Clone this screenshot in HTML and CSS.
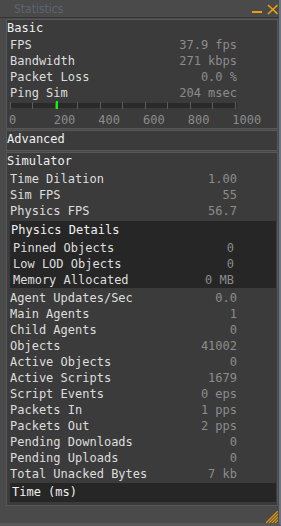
FILE: index.html
```html
<!DOCTYPE html>
<html lang="en">

<head>
  <meta charset="UTF-8">
  <meta name="viewport" content="width=device-width, initial-scale=1.0">
  <title>Statistics</title>

  <link rel="stylesheet" href="styles.css">
</head>

<body>
  <div class="floater">
    <div class="titlebar">
      <span class="title">Statistics</span>
      <span class="buttons">
        <svg class="btn" width="11" height="11" viewBox="0 0 11 11"><rect x="1" y="7" width="10" height="2" fill="#e8a010"/></svg>
        <svg class="btn" width="11" height="11" viewBox="0 0 11 11"><path d="M1 1 L10.5 10 M10.5 1 L1 10" stroke="#e8a010" stroke-width="1.6"/></svg>
      </span>
    </div>

    <div class="content">
      <section class="panel basic">
        <div class="panel-head">Basic</div>
        <div class="stat"><span>FPS</span><span class="val">37.9 fps</span></div>
        <div class="stat"><span>Bandwidth</span><span class="val">271 kbps</span></div>
        <div class="stat"><span>Packet Loss</span><span class="val">0.0 %</span></div>
        <div class="stat"><span>Ping Sim</span><span class="val">204 msec</span></div>
        <div class="graph">
          <div class="bar">
            <div class="marker" style="left: 45.9px"></div>
          </div>
          <div class="scale">
            <span>0</span><span>200</span><span>400</span><span>600</span><span>800</span><span>1000</span>
          </div>
        </div>
      </section>

      <section class="panel advanced">
        <div class="panel-head">Advanced</div>
      </section>

      <section class="panel simulator">
        <div class="panel-head">Simulator</div>
        <div class="stat"><span>Time Dilation</span><span class="val">1.00</span></div>
        <div class="stat"><span>Sim FPS</span><span class="val">55</span></div>
        <div class="stat"><span>Physics FPS</span><span class="val">56.7</span></div>

        <div class="box">
          <div class="box-head">Physics Details</div>
          <div class="stat"><span>Pinned Objects</span><span class="val">0</span></div>
          <div class="stat"><span>Low LOD Objects</span><span class="val">0</span></div>
          <div class="stat"><span>Memory Allocated</span><span class="val">0 MB</span></div>
        </div>

        <div class="stat"><span>Agent Updates/Sec</span><span class="val">0.0</span></div>
        <div class="stat"><span>Main Agents</span><span class="val">1</span></div>
        <div class="stat"><span>Child Agents</span><span class="val">0</span></div>
        <div class="stat"><span>Objects</span><span class="val">41002</span></div>
        <div class="stat"><span>Active Objects</span><span class="val">0</span></div>
        <div class="stat"><span>Active Scripts</span><span class="val">1679</span></div>
        <div class="stat"><span>Script Events</span><span class="val">0 eps</span></div>
        <div class="stat"><span>Packets In</span><span class="val">1 pps</span></div>
        <div class="stat"><span>Packets Out</span><span class="val">2 pps</span></div>
        <div class="stat"><span>Pending Downloads</span><span class="val">0</span></div>
        <div class="stat"><span>Pending Uploads</span><span class="val">0</span></div>
        <div class="stat"><span>Total Unacked Bytes</span><span class="val">7 kb</span></div>

        <div class="box time">
          <div class="box-head">Time (ms)</div>
        </div>
      </section>
    </div>

    <svg class="grip" width="12" height="12" viewBox="0 0 12 12">
      <path d="M12 0 L0 12 M12 3 L3 12 M12 6 L6 12 M12 9 L9 12" stroke="#d89410" stroke-width="1.3"/>
    </svg>
  </div>
</body>

</html>
```

FILE: styles.css
```css
body {
  margin: 0;
  background-color: #4a4a4a;
  font-family: "DejaVu Sans Mono", monospace;
  font-size: 12px;
  color: #dedede;
}

.floater {
  position: relative;
  width: 281px;
  height: 526px;
  box-sizing: border-box;
  background-color: #4a4a4a;
  border-right: 2px solid #6a7580;
  border-bottom: 3px solid #585858;
}

.titlebar {
  height: 17px;
  border-bottom: 1px solid #333333;
  display: flex;
  align-items: center;
  justify-content: space-between;
  padding: 0 1px 0 14px;
}

.title {
  font-family: "DejaVu Sans Condensed", "DejaVu Sans", sans-serif;
  font-stretch: condensed;
  font-size: 12px;
  color: #5a6570;
}

.buttons {
  display: flex;
  gap: 5px;
  margin-top: 1px;
}

.content {
  padding: 1px 1px 0 6px;
  display: flex;
  flex-direction: column;
  gap: 1px;
}

.panel {
  background-color: #3b3b3b;
  border: 1px solid #575757;
}

.panel-head {
  height: 17px;
  line-height: 17px;
  color: #f0f0f0;
}

.advanced {
  height: 19px;
}

.simulator {
  height: 352px;
}

.simulator > .panel-head {
  height: 18px;
}

.stat {
  display: flex;
  justify-content: space-between;
  height: 16px;
  line-height: 16px;
  padding: 0 40px 0 3px;
}

.val {
  color: #8c8c8c;
}

.graph {
  padding: 1px 0 0 3px;
}

.bar {
  position: relative;
  width: 227px;
  height: 7px;
  background: repeating-linear-gradient(to right, #5a5a5a 0 1px, transparent 1px 22.5px),
    linear-gradient(to bottom, transparent 0 1px, #2a2a2a 1px 6px, transparent 6px);
}

.marker {
  position: absolute;
  top: -1px;
  width: 2px;
  height: 8px;
  background-color: #00ff00;
}

.scale {
  display: flex;
  margin-top: 3px;
  margin-left: -1px;
  height: 16px;
  line-height: 16px;
  color: #8c8c8c;
}

.scale span {
  width: 45px;
}

.box {
  background-color: #262626;
  margin: 2px 1px 2px 3px;
}

.box-head {
  height: 19px;
  line-height: 18px;
  padding-left: 1px;
  color: #f0f0f0;
}

.box .stat {
  padding: 0 42px 0 3px;
}

.time {
  margin-top: 1px;
}

.time .box-head {
  padding-left: 2px;
}

.grip {
  position: absolute;
  right: 1px;
  bottom: 0;
}
```
